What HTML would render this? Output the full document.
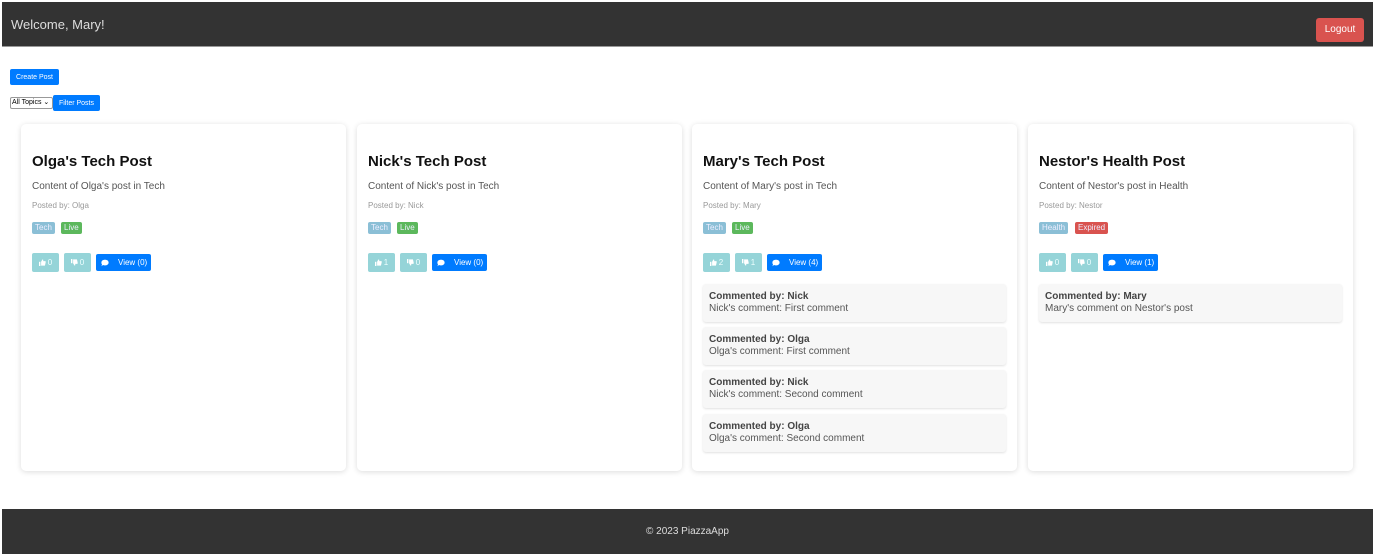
<!DOCTYPE html>
<html><head><style>
*{box-sizing:border-box;margin:0;padding:0}
body{width:1376px;height:558px;background:#fff;font-family:"Liberation Sans",sans-serif;position:relative;overflow:hidden}
.nav{position:absolute;left:2px;top:2px;width:1371px;height:45px;background:#333;border-bottom:1px solid #999}
.nav .w{position:absolute;left:9px;top:15px;color:#ddd;font-size:13px}
.logout{position:absolute;left:1314px;top:16px;width:48px;height:24px;background:#d9534f;border-radius:3px;color:#fff;font-size:10px;text-align:center;line-height:24px}
.btn{position:absolute;background:#007bff;color:#fff;font-size:7px;border-radius:2px;display:flex;align-items:center;justify-content:center}
.sel{position:absolute;left:10px;top:97px;width:43px;height:12px;border:1px solid #999;border-radius:2px;font-size:7px;line-height:10px;padding-left:1px;background:#fff}
.card{position:absolute;top:124px;width:325px;height:347px;background:#fff;border-radius:5px;box-shadow:0 1px 6px rgba(0,0,0,.14)}
.card h3{position:absolute;left:11px;top:29px;font-size:15px;color:#111}
.c{position:absolute;left:11px;top:57px;font-size:10px;color:#555}
.p{position:absolute;left:11px;top:77px;font-size:8px;color:#999}
.bd{position:absolute;top:98px;height:12px;font-size:8px;color:#eef;line-height:12px;padding:0 3px;border-radius:2px}
.lk{position:absolute;top:129px;height:19px;width:27px;background:#95d4d8;border-radius:2px;color:#eff;font-size:8px;display:flex;align-items:center;justify-content:center;gap:2px}
.cm{position:absolute;top:130px;height:17px;width:55px;background:#007bff;border-radius:2px;color:#fff;font-size:8px;display:flex;align-items:center}
.cm svg{margin:0 9px 0 5px}
.co{position:absolute;left:11px;width:303px;height:38px;background:#f7f7f7;border-radius:3px;box-shadow:0 1px 2px rgba(0,0,0,.12);padding:7px 6px;font-size:10px;color:#555;line-height:12px}
.co b{color:#444}
.foot{position:absolute;left:2px;top:509px;width:1371px;height:45px;background:#333;color:#ddd;font-size:10px;text-align:center;line-height:45px}
</style></head><body>
<svg width="0" height="0" style="position:absolute"><defs>
<symbol id="up" viewBox="0 0 10 10"><rect x="0" y="4" width="2" height="6" fill="#fff"/><path d="M3 4 L5 0.5 Q6.5 0.5 6 3 L9 3 Q10 3.5 9.5 5 L8.5 9.5 L3 9.5Z" fill="#fff"/></symbol>
<symbol id="dn" viewBox="0 0 10 10"><rect x="0" y="0" width="2" height="6" fill="#fff"/><path d="M3 6 L5 9.5 Q6.5 9.5 6 7 L9 7 Q10 6.5 9.5 5 L8.5 0.5 L3 0.5Z" fill="#fff"/></symbol>
<symbol id="bub" viewBox="0 0 10 10"><path d="M5 1 C8 1 9.5 2.5 9.5 4.5 C9.5 6.5 7.5 8 5 8 C4 8 3 7.8 2.5 7.5 L0.5 9 L1.3 6.8 C0.8 6.2 0.5 5.4 0.5 4.5 C0.5 2.5 2 1 5 1Z" fill="#fff"/></symbol>
</defs></svg>
<div class="nav"><span class="w">Welcome, Mary!</span><div class="logout">Logout</div></div>
<div class="btn" style="left:10px;top:69px;width:49px;height:16px">Create Post</div>
<div class="sel">All Topics ⌄</div>
<div class="btn" style="left:53px;top:95px;width:47px;height:16px">Filter Posts</div>

<div class="card" style="left:21px"><h3>Olga's Tech Post</h3><div class="c">Content of Olga's post in Tech</div><div class="p">Posted by: Olga</div>
<div class="bd" style="left:11px;background:#8bbfd6">Tech</div><div class="bd" style="left:40px;background:#5cb85c">Live</div>
<div class="lk" style="left:11px"><svg width="7" height="7"><use href="#up"/></svg>0</div><div class="lk" style="left:43px"><svg width="7" height="7"><use href="#dn"/></svg>0</div><div class="cm" style="left:75px"><svg width="8" height="8"><use href="#bub"/></svg>View (0)</div></div>

<div class="card" style="left:357px"><h3>Nick's Tech Post</h3><div class="c">Content of Nick's post in Tech</div><div class="p">Posted by: Nick</div>
<div class="bd" style="left:11px;background:#8bbfd6">Tech</div><div class="bd" style="left:40px;background:#5cb85c">Live</div>
<div class="lk" style="left:11px"><svg width="7" height="7"><use href="#up"/></svg>1</div><div class="lk" style="left:43px"><svg width="7" height="7"><use href="#dn"/></svg>0</div><div class="cm" style="left:75px"><svg width="8" height="8"><use href="#bub"/></svg>View (0)</div></div>

<div class="card" style="left:692px"><h3>Mary's Tech Post</h3><div class="c">Content of Mary's post in Tech</div><div class="p">Posted by: Mary</div>
<div class="bd" style="left:11px;background:#8bbfd6">Tech</div><div class="bd" style="left:40px;background:#5cb85c">Live</div>
<div class="lk" style="left:11px"><svg width="7" height="7"><use href="#up"/></svg>2</div><div class="lk" style="left:43px"><svg width="7" height="7"><use href="#dn"/></svg>1</div><div class="cm" style="left:75px"><svg width="8" height="8"><use href="#bub"/></svg>View (4)</div>
<div class="co" style="top:160px"><b>Commented by: Nick</b><br>Nick's comment: First comment</div>
<div class="co" style="top:203px"><b>Commented by: Olga</b><br>Olga's comment: First comment</div>
<div class="co" style="top:246px"><b>Commented by: Nick</b><br>Nick's comment: Second comment</div>
<div class="co" style="top:290px"><b>Commented by: Olga</b><br>Olga's comment: Second comment</div></div>

<div class="card" style="left:1028px"><h3>Nestor's Health Post</h3><div class="c">Content of Nestor's post in Health</div><div class="p">Posted by: Nestor</div>
<div class="bd" style="left:11px;background:#8bbfd6">Health</div><div class="bd" style="left:47px;background:#d9534f">Expired</div>
<div class="lk" style="left:11px"><svg width="7" height="7"><use href="#up"/></svg>0</div><div class="lk" style="left:43px"><svg width="7" height="7"><use href="#dn"/></svg>0</div><div class="cm" style="left:75px"><svg width="8" height="8"><use href="#bub"/></svg>View (1)</div>
<div class="co" style="top:160px"><b>Commented by: Mary</b><br>Mary's comment on Nestor's post</div></div>

<div class="foot">© 2023 PiazzaApp</div>
</body></html>
